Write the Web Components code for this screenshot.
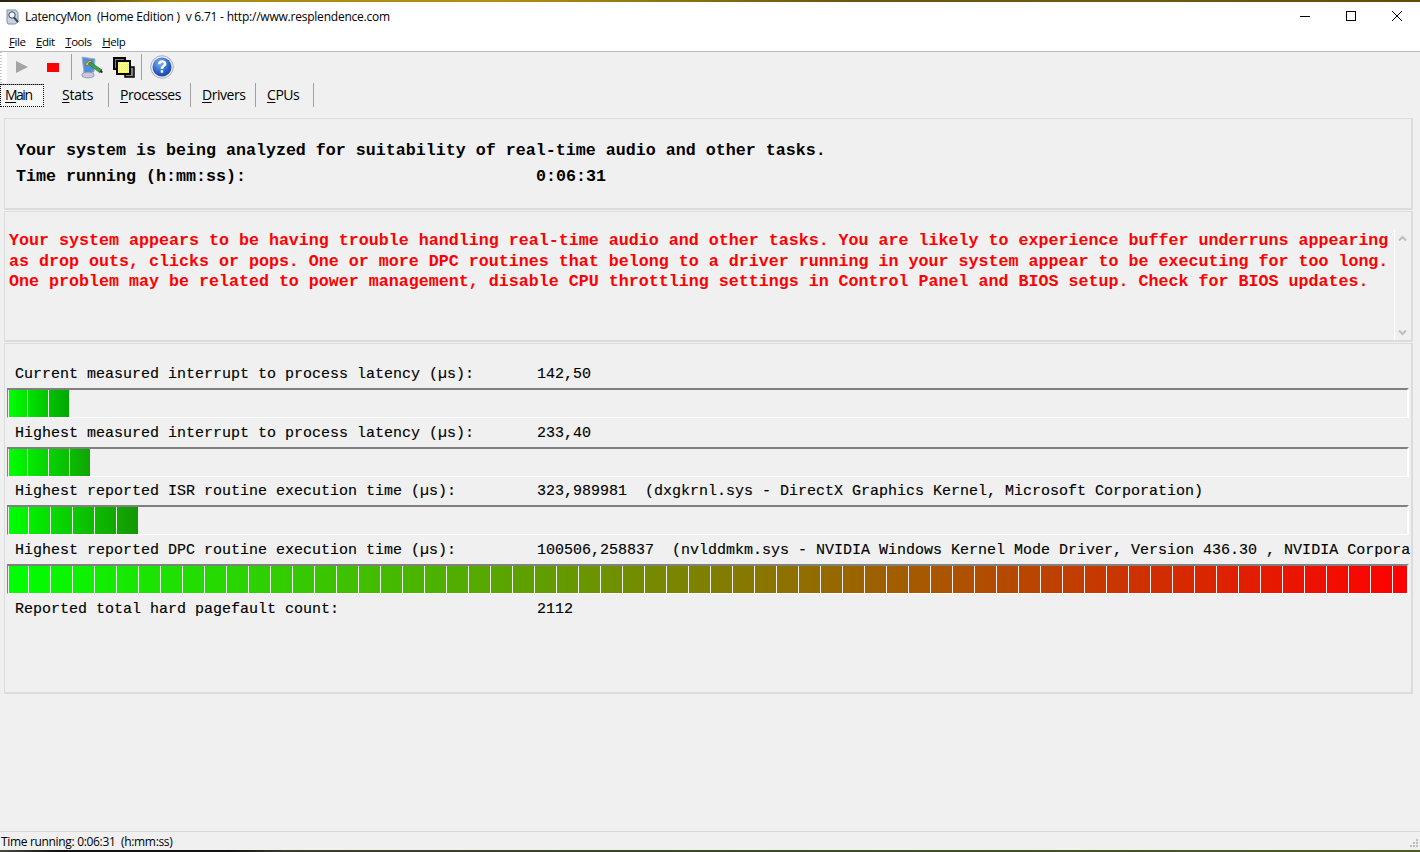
<!DOCTYPE html>
<html><head><meta charset="utf-8">
<style>
html,body{margin:0;padding:0;background:#f0f0f0;}
body{width:1420px;height:852px;overflow:hidden;}
</style></head>
<body>
<latency-app></latency-app>
<script>
const UI='"Open Sans","Noto Sans",sans-serif';
const MONO='"Liberation Mono","Courier New",monospace';
function def(name,html,extra){
  class C extends HTMLElement{
    constructor(){super();const r=this.attachShadow({mode:'open'});r.innerHTML=html;}
    connectedCallback(){if(extra)extra(this);}
  }
  customElements.define(name,C);
}
def('title-bar',`<style>
:host{display:flex;align-items:center;height:30px;background:#fff;font:12px/16px ${UI};color:#000;letter-spacing:-.22px}
svg{display:block;flex:none}
.ic{margin:0 5px 0 5px}
.t{flex:1;white-space:pre;padding-bottom:1px}
.b{width:46px;height:30px;display:flex;align-items:center;justify-content:center}
.b svg{position:relative;top:-1px}
</style>
<svg class="ic" width="15" height="16" viewBox="0 0 15 16"><path d="M2 1h9l2 3v9l-3 2H3l-1-2z" fill="#c9d3e4" stroke="#7f8ea8"/><circle cx="7" cy="6" r="3.2" fill="#eef4fb" stroke="#3d4a5c"/><path d="M9 8.5l4 4.5" stroke="#39465a" stroke-width="2"/></svg>
<span class="t">LatencyMon  (Home Edition )  v 6.71 - http://www.resplendence.com</span>
<div class="b"><svg width="10" height="10"><path d="M0 5.5h10" stroke="#000"/></svg></div>
<div class="b"><svg width="10" height="10"><rect x=".5" y=".5" width="9" height="9" fill="none" stroke="#000"/></svg></div>
<div class="b"><svg width="10" height="10"><path d="M0 0l10 10M10 0L0 10" stroke="#000"/></svg></div>`);
def('menu-bar',`<style>
:host{display:flex;gap:10.6px;height:19px;padding-left:9px;box-sizing:content-box;background:#fff;border-bottom:1px solid #b9b9bf;font:11.5px/19px ${UI};color:#000;letter-spacing:-.45px}
u{text-decoration-thickness:1px;text-underline-offset:1px}
</style><span><u>F</u>ile</span><span><u>E</u>dit</span><span><u>T</u>ools</span><span><u>H</u>elp</span>`);
def('tool-bar',`<style>
:host{display:flex;align-items:center;height:30px;padding-bottom:1px;background:#f0f0f0}
.grip{width:7px;align-self:stretch;margin-bottom:-1px;background:repeating-linear-gradient(#c8c8c8 0 1px,transparent 1px 3px) left top/2px 100% no-repeat,#fff;flex:none}
.sep{width:1px;height:26px;background:#a0a0a0;flex:none}
svg{display:block;flex:none}
</style>
<div class="grip"></div>
<svg style="margin-left:9px" width="12" height="12"><path d="M0 0l12 6L0 12z" fill="#a4a4a4"/></svg>
<svg style="margin-left:19px" width="12" height="9"><rect width="12" height="9" fill="#f00"/></svg>
<div class="sep" style="margin-left:12px"></div>
<svg style="margin-left:8px" width="24" height="24" viewBox="0 0 24 24"><path d="M2 2l13 2-1 13-10 1z" fill="#4f8fdc" stroke="#9fb0cc" stroke-width="1"/><path d="M2 19c2-2.500 10-2.500 12 0v2c-2 2.500-10 2.500-12 0z" fill="#c9cbdc" stroke="#7b7d96" stroke-width=".7"/><path d="M5 9l5-4 2 2-5 4z" fill="#f3b23c" stroke="#8a5a10" stroke-width=".6"/><path d="M10 7l12 8-2.500 2.500-11-8.500z" fill="#39a848" stroke="#1d6a2a" stroke-width=".7"/><path d="M21 15l2 2-1.500 1-2-1z" fill="#222"/></svg>
<svg style="margin-left:9px" width="23" height="23" viewBox="0 0 23 23"><defs><pattern id="d" width="2" height="2" patternUnits="userSpaceOnUse"><rect width="2" height="2" fill="#ff0"/><rect width="1" height="1" fill="#fff"/><rect x="1" y="1" width="1" height="1" fill="#fff"/></pattern></defs><rect x="1" y="2" width="11" height="11" fill="#808080" stroke="#000" stroke-width="2"/><rect x="12" y="11" width="9" height="10" fill="#808080" stroke="#000" stroke-width="1.500"/><rect x="4" y="5" width="13" height="13" fill="url(#d)" stroke="#000" stroke-width="2"/></svg>
<div class="sep" style="margin-left:5px"></div>
<svg style="margin-left:8px" width="24" height="24" viewBox="0 0 24 24"><defs><radialGradient id="g" cx=".4" cy=".3" r=".8"><stop offset="0" stop-color="#7fb4f2"/><stop offset=".6" stop-color="#2a62c8"/><stop offset="1" stop-color="#173c94"/></radialGradient></defs><circle cx="12" cy="12" r="11.300" fill="#e4e9f4" stroke="#a8b2c6"/><circle cx="12" cy="12" r="9.500" fill="url(#g)"/><path d="M8 9C8.200 6.300 10 5.300 12.200 5.300c2.500 0 4.200 1.300 4.200 3.400 0 2.900-3.200 2.900-3.200 5.300h-2.500c0-3.500 3-3.500 3-5.200 0-.9-.6-1.400-1.600-1.400-1.100 0-1.500.7-1.600 1.800z" fill="#fff"/><rect x="10.700" y="15.200" width="2.500" height="2.500" fill="#fff"/></svg>`);
def('tab-strip',`<style>
:host{display:flex;height:25px;background:#f0f0f0;font:14px/24px ${UI};color:#000;letter-spacing:-.45px}
.tab{box-sizing:border-box;height:24px;flex:none;border-right:1px solid #a0a0a0;display:block;padding-left:10px;white-space:pre;margin-right:1px}
.m{width:44px;padding:0 0 0 5px;margin-right:6px;border:0;outline:1px dotted #000;outline-offset:-1px;height:23px;margin-top:1px;border-top:1px solid #808080;background:repeating-conic-gradient(#fff 0 25%,#f0f0f0 0 50%) 0 0/2px 2px;line-height:20px;letter-spacing:-1.5px}
u{text-decoration-thickness:1px;text-underline-offset:2px}
</style>
<span class="tab m"><u>M</u>ain</span>
<span class="tab" style="width:59px;padding-left:12px;letter-spacing:-.2px"><u>S</u>tats</span>
<span class="tab" style="width:81px"><u>P</u>rocesses</span>
<span class="tab" style="width:64px"><u>D</u>rivers</span>
<span class="tab" style="width:57px"><u>C</u>PUs</span>`);
def('group-panel',`<style>
:host{display:block;box-sizing:border-box;margin:0 7px 0 4px;border:1px solid #dcdcdc;border-right-width:2px;border-bottom-width:2px;background:#f0f0f0;position:relative;overflow:hidden}
</style><slot></slot>`);
def('status-head',`<style>
:host{display:block;font:bold 16.67px/26px ${MONO};color:#000;padding:19px 0 0 11px;white-space:pre}
.r{display:flex}.l{width:520px}
</style><div>Your system is being analyzed for suitability of real-time audio and other tasks.</div><div class="r"><span class="l">Time running (h:mm:ss):</span><span>0:06:31</span></div>`);
def('warn-text',`<style>
:host{display:block;height:100%;box-sizing:border-box;font:bold 16.67px/20.5px ${MONO};color:#f00;padding:19px 0 0 4px;position:relative}
.sb{position:absolute;right:0;top:18px;bottom:0;width:17px;border-left:1px solid #fff;display:flex;flex-direction:column;justify-content:space-between;align-items:center;padding:0 2px 4px 0;box-sizing:border-box}
svg{display:block;margin-top:5px}
</style><div style="white-space:pre">Your system appears to be having trouble handling real-time audio and other tasks. You are likely to experience buffer underruns appearing
as drop outs, clicks or pops. One or more DPC routines that belong to a driver running in your system appear to be executing for too long.
One problem may be related to power management, disable CPU throttling settings in Control Panel and BIOS setup. Check for BIOS updates.</div>
<div class="sb"><svg width="9" height="7"><path d="M1 5.500l3.500-3.500L8 5.500" fill="none" stroke="#bdbdbd" stroke-width="2"/></svg><svg width="9" height="7"><path d="M1 1.500l3.500 3.500L8 1.500" fill="none" stroke="#bdbdbd" stroke-width="2"/></svg></div>`);
def('metric-row',`<style>
:host{display:flex;height:18px;font:15px/18px ${MONO};color:#000;padding-left:8px;white-space:pre;overflow:hidden;-webkit-text-stroke:.15px #000}
.l{width:522px;flex:none}
</style><span class="l"><slot name="l"></slot></span><span><slot name="v"></slot></span>`);
function mix(t){t=Math.max(0,Math.min(1,t));return `rgb(${Math.round(255*t)},${Math.round(255*(1-t))},0)`}
def('lat-bar',`<style>
:host{display:flex;box-sizing:border-box;height:30px;border:solid;border-width:2px 2px 1px 1px;border-color:#808080 #fff #fff #808080;padding-left:1px;width:1402px}
.s{height:27px;flex:none;margin-right:1px}
.s:last-child{margin-right:0}
</style>`,el=>{
  const widths=el.getAttribute('w').split(',').map(Number);
  const greenEnd=el.getAttribute('g');
  const total=widths.reduce((a,b)=>a+b+1,0);let x=0;
  for(const w of widths){
    const d=document.createElement('div');d.className='s';d.style.width=w+'px';
    let a,b;
    if(greenEnd){const f=t=>{const [r,g]=greenEnd.split('/').map(Number);return `rgb(${Math.round(r*t)},${Math.round(255-(255-g)*t)},0)`};a=f(x/total);b=f((x+w)/total)}
    else{a=mix(x/total);b=mix((x+w)/total)}
    d.style.background=`linear-gradient(to right,${a},${b})`;
    el.shadowRoot.appendChild(d);x+=w+1;
  }
});
def('status-bar',`<style>
:host{display:block;box-sizing:border-box;height:19px;border-top:1px solid #d7d7d7;background:#f0f0f0;font:12px/20px ${UI};color:#000;padding-left:1px;white-space:pre;letter-spacing:-.33px;position:relative}
svg{position:absolute;right:2px;bottom:2px}
</style>Time running: 0:06:31  (h:mm:ss)<svg width="8" height="9" fill="#bdbdbd"><rect x="6" y="0" width="2" height="2"/><rect x="3" y="3" width="2" height="2"/><rect x="6" y="3" width="2" height="2"/><rect x="0" y="6" width="2" height="2"/><rect x="3" y="6" width="2" height="2"/><rect x="6" y="6" width="2" height="2"/></svg>`);
const seg=(first,n,w,last)=>[first,...Array(n).fill(w),...(last?[last]:[])].join(',');
def('latency-app',`<style>
:host{display:flex;flex-direction:column;height:852px;width:1420px;background:#f0f0f0;overflow:hidden}
.top{height:2px;flex:none;background:linear-gradient(to right,#2b2208,#4a3a08 5%,#a98a10 12%,#b0900f 35%,#6a5410 60%,#6d5a12 80%,#5f4c0c)}
.bot{height:2px;flex:none;background:linear-gradient(to right,#4a4a3a,#111 4%,#111 16%,#3a3a2a 20%,#3a4a20 50%,#4d5a20)}
main{flex:1;display:flex;flex-direction:column;padding-top:10px}
.rows{display:flex;flex-direction:column;padding:22px 0 0 2px}
metric-row+lat-bar{margin-top:4px}
lat-bar+metric-row{margin-top:6.67px}
</style>
<div class="top"></div>
<title-bar></title-bar>
<menu-bar></menu-bar>
<tool-bar></tool-bar>
<tab-strip></tab-strip>
<main>
<group-panel style="height:92px;flex:none"><status-head></status-head></group-panel>
<group-panel style="height:131px;flex:none;margin-top:1px"><warn-text></warn-text></group-panel>
<group-panel style="height:351px;flex:none;margin-top:1px"><div class="rows">
<metric-row><span slot="l">Current measured interrupt to process latency (µs):</span><span slot="v">142,50</span></metric-row>
<lat-bar w="${seg(18,2,20)}" g="0/165"></lat-bar>
<metric-row><span slot="l">Highest measured interrupt to process latency (µs):</span><span slot="v">233,40</span></metric-row>
<lat-bar w="${seg(18,3,20)}" g="15/165"></lat-bar>
<metric-row><span slot="l">Highest reported ISR routine execution time (µs):</span><span slot="v">323,989981  (dxgkrnl.sys - DirectX Graphics Kernel, Microsoft Corporation)</span></metric-row>
<lat-bar w="${seg(19,5,21)}" g="20/150"></lat-bar>
<metric-row><span slot="l">Highest reported DPC routine execution time (µs):</span><span slot="v">100506,258837  (nvlddmkm.sys - NVIDIA Windows Kernel Mode Driver, Version 436.30 , NVIDIA Corporation)</span></metric-row>
<lat-bar w="${seg(19,62,21,14)}"></lat-bar>
<metric-row><span slot="l">Reported total hard pagefault count:</span><span slot="v">2112</span></metric-row>
</div></group-panel>
</main>
<status-bar></status-bar>
<div class="bot"></div>`);
</script>
</body></html>
